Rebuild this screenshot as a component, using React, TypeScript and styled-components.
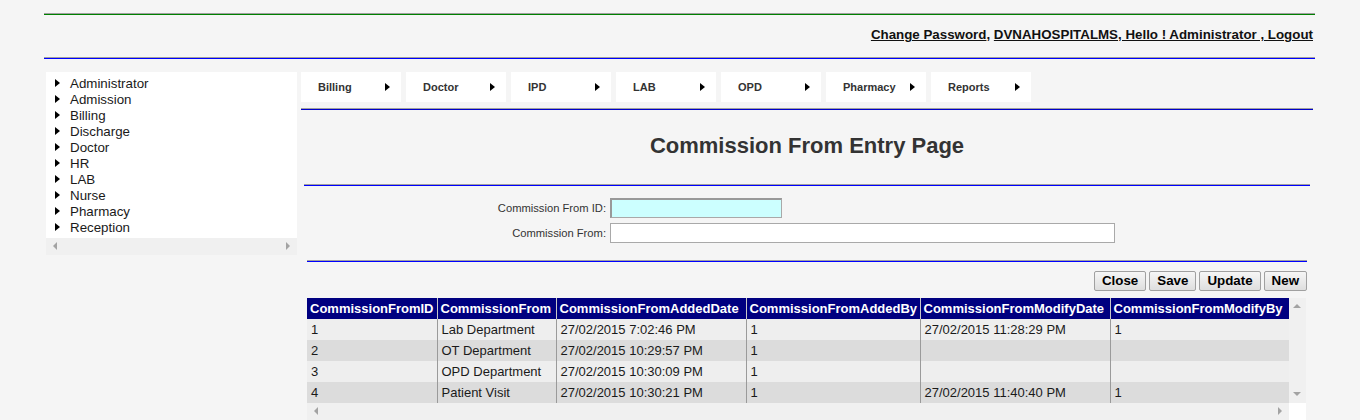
import React from "react";
import styled, { createGlobalStyle } from "styled-components";

const Global = createGlobalStyle`
  html, body { margin: 0; padding: 0; background: #f5f5f5; }
  body { font-family: "Liberation Sans", Arial, sans-serif; }
  * { box-sizing: border-box; }
`;

const Page = styled.div`
  width: 1271px;
  margin: 0 0 0 44px;
  padding-top: 13px;
`;

const Rule = styled.div<{ $color: string; $inset?: number }>`
  height: 2px;
  margin: 0 ${(p) => p.$inset ?? 0}px;
  border-top: 1px solid #a0a0a0;
  border-bottom: 1px solid ${(p) => p.$color};
`;

const TopBar = styled.div`
  display: flex;
  justify-content: flex-end;
  padding: 12px 2px 14px 0;
  font-size: 13.33px;
  line-height: 16px;
  font-weight: bold;
  color: #111;
`;

const Link = styled.span`
  text-decoration: underline;
`;

const Main = styled.div`
  display: grid;
  grid-template-columns: 251px 1fr;
  column-gap: 4px;
  padding: 0 2px;
  margin-top: 13px;
  align-items: start;
`;

const SidePanel = styled.div`
  background: #fff;
  display: flex;
  flex-direction: column;
`;

const TreeList = styled.ul`
  list-style: none;
  margin: 0;
  padding: 3px 0 3px 9px;
`;

const TreeItem = styled.li`
  display: flex;
  align-items: center;
  height: 16px;
  font-size: 13.33px;
  color: #1a1a1a;
  gap: 10px;
`;

const Tri = styled.span<{ $size?: number }>`
  width: 0;
  height: 0;
  border-top: ${(p) => p.$size ?? 4}px solid transparent;
  border-bottom: ${(p) => p.$size ?? 4}px solid transparent;
  border-left: ${(p) => (p.$size ?? 4) + 1}px solid #000;
  flex: none;
`;

const HScroll = styled.div<{ $bg?: string }>`
  height: 17px;
  background: ${(p) => p.$bg ?? "#f0f0f0"};
  display: flex;
  align-items: center;
  justify-content: space-between;
  padding: 0 6px;
`;

const VScroll = styled.div`
  width: 17px;
  background: #f0f0f0;
  display: flex;
  flex-direction: column;
  align-items: center;
  justify-content: space-between;
  padding: 5px 0 6px;
`;

const Arrow = ({ dir }: { dir: "l" | "r" | "u" | "d" }) => {
  const pts =
    dir === "l"
      ? "5,0 5,8 1,4"
      : dir === "r"
      ? "1,0 1,8 5,4"
      : dir === "u"
      ? "0,5 8,5 4,1"
      : "0,1 8,1 4,5";
  const w = dir === "l" || dir === "r" ? 6 : 9;
  const h = dir === "l" || dir === "r" ? 9 : 6;
  return (
    <svg width={w} height={h} viewBox={`0 0 ${w} ${h}`}>
      <polygon points={pts} fill="#a3a3a3" />
    </svg>
  );
};

const Content = styled.div`
  display: flex;
  flex-direction: column;
`;

const MenuBar = styled.div`
  display: flex;
  gap: 5px;
  margin-bottom: 6px;
`;

const MenuItem = styled.div`
  width: 100px;
  height: 30px;
  background: #fff;
  display: flex;
  align-items: center;
  justify-content: space-between;
  padding: 0 11px 0 17px;
  font-size: 11px;
  font-weight: bold;
  color: #333;
`;

const Title = styled.h1`
  margin: 23px 0 25px;
  text-align: center;
  font-size: 22px;
  line-height: 26px;
  font-weight: bold;
  color: #333;
`;

const FormGrid = styled.div`
  display: grid;
  grid-template-columns: 305px auto;
  column-gap: 4px;
  row-gap: 5px;
  margin: 12px 0 17px;
  align-items: center;
`;

const Label = styled.label`
  text-align: right;
  font-size: 11.2px;
  color: #333;
`;

const Input = styled.div<{ $w: number; $key?: boolean }>`
  width: ${(p) => p.$w}px;
  height: 20px;
  background: ${(p) => (p.$key ? "#ccffff" : "#fff")};
  border: 1px solid #a9a9a9;
  ${(p) => (p.$key ? "border-top: 2px solid #999; border-left: 2px solid #999;" : "")}
`;

const Inner = styled.div`
  padding: 0 6px;
  display: flex;
  flex-direction: column;
`;

const ButtonRow = styled.div`
  display: flex;
  justify-content: flex-end;
  gap: 3px;
  margin: 9px 0 7px;
`;

const Button = styled.button`
  height: 20px;
  padding: 0 7px;
  font-family: "Liberation Sans", Arial, sans-serif;
  font-size: 13.33px;
  font-weight: bold;
  color: #000;
  background: linear-gradient(#f6f6f6, #dedede);
  border: 1px solid #a0a0a0;
  border-radius: 2px;
  line-height: 16px;
`;

const GridWrap = styled.div`
  display: grid;
  grid-template-columns: 982px 17px;
  grid-template-rows: auto 17px;
`;

const Table = styled.table`
  border-collapse: collapse;
  table-layout: fixed;
  width: 982px;
  font-size: 13px;
`;

const Th = styled.th`
  background: #000080;
  color: #fff;
  text-align: left;
  font-weight: bold;
  height: 21px;
  padding: 0 3px;
  border-left: 1px solid #c8c8c8;
  white-space: nowrap;
  overflow: hidden;
  &:first-child { border-left: none; }
`;

const Tr = styled.tr<{ $alt: boolean }>`
  background: ${(p) => (p.$alt ? "#dcdcdc" : "#eeeeee")};
`;

const Td = styled.td`
  height: 21px;
  padding: 0 4px;
  color: #1a1a1a;
  border-left: 1px solid #9a9a9a;
  white-space: nowrap;
  &:first-child { border-left: none; }
`;

const Corner = styled.div`
  background: #fff;
`;

const tree = [
  "Administrator",
  "Admission",
  "Billing",
  "Discharge",
  "Doctor",
  "HR",
  "LAB",
  "Nurse",
  "Pharmacy",
  "Reception",
];

const menu = ["Billing", "Doctor", "IPD", "LAB", "OPD", "Pharmacy", "Reports"];

const cols = [
  { name: "CommissionFromID", w: 130 },
  { name: "CommissionFrom", w: 119 },
  { name: "CommissionFromAddedDate", w: 190 },
  { name: "CommissionFromAddedBy", w: 174 },
  { name: "CommissionFromModifyDate", w: 190 },
  { name: "CommissionFromModifyBy", w: 179 },
];

const rows = [
  ["1", "Lab Department", "27/02/2015 7:02:46 PM", "1", "27/02/2015 11:28:29 PM", "1"],
  ["2", "OT Department", "27/02/2015 10:29:57 PM", "1", "", ""],
  ["3", "OPD Department", "27/02/2015 10:30:09 PM", "1", "", ""],
  ["4", "Patient Visit", "27/02/2015 10:30:21 PM", "1", "27/02/2015 11:40:40 PM", "1"],
];

export default function App() {
  return (
    <>
      <Global />
      <Page>
        <Rule $color="#008000" />
        <TopBar>
          <Link>Change Password</Link>,&nbsp;
          <Link>DVNAHOSPITALMS, Hello ! Administrator , Logout</Link>
        </TopBar>
        <Rule $color="#0000ff" />
        <Main>
          <SidePanel>
            <TreeList>
              {tree.map((t) => (
                <TreeItem key={t}>
                  <Tri />
                  {t}
                </TreeItem>
              ))}
            </TreeList>
            <HScroll>
              <Arrow dir="l" />
              <Arrow dir="r" />
            </HScroll>
          </SidePanel>
          <Content>
            <MenuBar>
              {menu.map((m) => (
                <MenuItem key={m}>
                  {m}
                  <Tri $size={4} />
                </MenuItem>
              ))}
            </MenuBar>
            <Rule $color="#0000cc" />
            <Title>Commission From Entry Page</Title>
            <Rule $color="#0000ff" $inset={3} />
            <FormGrid>
              <Label>Commission From ID:</Label>
              <Input $w={172} $key />
              <Label>Commission From:</Label>
              <Input $w={505} />
            </FormGrid>
            <Inner>
              <Rule $color="#0000ff" />
              <ButtonRow>
                <Button>Close</Button>
                <Button>Save</Button>
                <Button>Update</Button>
                <Button>New</Button>
              </ButtonRow>
              <GridWrap>
                <Table>
                  <colgroup>
                    {cols.map((c) => (
                      <col key={c.name} style={{ width: c.w }} />
                    ))}
                  </colgroup>
                  <thead>
                    <tr>
                      {cols.map((c) => (
                        <Th key={c.name}>{c.name}</Th>
                      ))}
                    </tr>
                  </thead>
                  <tbody>
                    {rows.map((r, i) => (
                      <Tr key={i} $alt={i % 2 === 1}>
                        {r.map((v, j) => (
                          <Td key={j}>{v}</Td>
                        ))}
                      </Tr>
                    ))}
                  </tbody>
                </Table>
                <VScroll>
                  <Arrow dir="u" />
                  <Arrow dir="d" />
                </VScroll>
                <HScroll>
                  <Arrow dir="l" />
                  <Arrow dir="r" />
                </HScroll>
                <Corner />
              </GridWrap>
            </Inner>
          </Content>
        </Main>
      </Page>
    </>
  );
}
